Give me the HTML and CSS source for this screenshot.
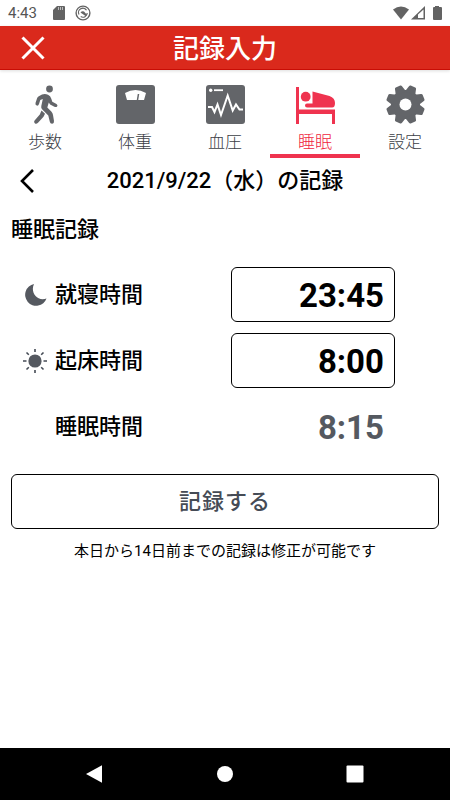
FILE: index.html
```html
<!DOCTYPE html>
<html lang="ja">
<head>
<meta charset="utf-8">
<meta name="viewport" content="width=device-width, initial-scale=1">
<title>記録入力</title>
<link rel="stylesheet" href="styles.css">
</head>
<body>
<div class="status">
  <span class="clock">4:43</span>
  <svg width="12" height="14" viewBox="0 0 12 14"><path fill="#636363" d="M4 0h7q1 0 1 1v12q0 1-1 1H1q-1 0-1-1V4z"/><path stroke="#bbb" d="M5.500 1v3M7.500 1v3M9.500 1v3"/></svg>
  <svg class="sync" width="16" height="16" viewBox="0 0 16 16"><circle cx="8" cy="8" r="6.900" fill="none" stroke="#636363" stroke-width="1.400"/><path fill="none" stroke="#636363" stroke-width="1.200" d="M4 9.500a4.300 4.300 0 0 1 7.500-4.200M12.200 8a4.300 4.300 0 0 1-6.500 3.600"/><path fill="#636363" d="M5.500 7.500q1.500-2 3.500-1l3 3.500-1.500 1z"/></svg>
  <svg class="signals" width="49" height="16" viewBox="0 0 49 16"><path fill="#636363" d="M0 4.500q8-6 16 0L8 14.500z"/><path fill="#636363" d="M18 14.500L32 1v13.500z"/><path fill="#fff" d="M25 9.500l5.500-5v8.500H25z"/><path fill="#636363" d="M42 1h4v1h2q1 0 1 1v11q0 1-1 1h-7q-1 0-1-1V3q0-1 1-1h1z"/></svg>
</div>
<header class="header">
  <button class="close" type="button" aria-label="閉じる"><svg width="24" height="24" viewBox="0 0 24 24"><path stroke="#fff" stroke-width="3" d="M1.500 1.500l21 21M22.500 1.500l-21 21"/></svg></button>
  <h1>記録入力</h1>
</header>
<nav class="tabs">
  <a class="tab" href="#steps">
    <svg width="39" height="39" viewBox="0 0 39 39"><circle cx="23.500" cy="4" r="3.400" fill="#636569"/><path fill="#636569" d="M16 9.500q3-1 6 .2q2.500 1 3.300 4l1 3 4.200 2.300q1.700 1.200.6 2.500q-1 1-2.700.3l-4.300-2.300-1.300-2-1.500 5 4 4q1.500 1.500 1.700 3.500l1 6q.2 2.500-1.700 2.800-2 .2-2.500-2l-1.500-6.300-6-6q-1.500-1.500-1-3.500l1.500-7-2.500 1-1.300 4q-.6 2-2.200 1.600-1.700-.5-1.300-2.500l1.500-4.500q.3-1.500 1.800-2.400z"/><path fill="#636569" d="M15.500 25.500l3.500 3.300-1.500 3-5.500 6q-1.800 1.700-3.200.4-1.300-1.200 0-3l5-5.700z"/></svg>
    <span>歩数</span>
  </a>
  <a class="tab" href="#weight">
    <svg width="39" height="39" viewBox="0 0 39 39"><rect width="39" height="39" rx="3" fill="#636569"/><path fill="#fff" d="M9 8q10.500-6 21 0l-2 7H11z"/><path stroke="#636569" stroke-width="1.500" d="M22.500 9l-1 6"/></svg>
    <span>体重</span>
  </a>
  <a class="tab" href="#pressure">
    <svg width="39" height="39" viewBox="0 0 39 39"><rect width="39" height="39" rx="3" fill="#636569"/><circle cx="4.700" cy="5.300" r="1.700" fill="#fff"/><path stroke="#fff" stroke-width="1.800" d="M8 5.200h9"/><path fill="none" stroke="#fff" stroke-width="2" d="M2 22h4l2.500 5 3-7.500L15 30l6.700-19.500 5 15 3.300-6 3.500 5H37"/></svg>
    <span>血圧</span>
  </a>
  <a class="tab active" href="#sleep" aria-current="page">
    <svg width="39" height="39" viewBox="0 0 39 39"><path fill="#ef334f" d="M0 2h3v22.500h36V39h-3V29H3v10H0z"/><circle cx="9.700" cy="11.700" r="4.900" fill="#ef334f"/><path fill="#ef334f" d="M16.500 6.500l17 4.500q5.500 2 5.500 7t-3.500 4.500H11q-2-.2-2-2t2-2h5.500z"/></svg>
    <span>睡眠</span>
  </a>
  <a class="tab" href="#settings">
    <svg width="39" height="39" viewBox="-19.500 -19.500 39 39"><g fill="#636569"><circle r="14.500"/><g id="teeth"><path id="tooth" d="M-5.500-12l1.700-6.300q.3-1.200 1.400-1.200h4.800q1.100 0 1.400 1.200l1.700 6.300z" transform="rotate(22.500)"/><use href="#tooth" transform="rotate(45)"/><use href="#tooth" transform="rotate(90)"/><use href="#tooth" transform="rotate(135)"/></g><use href="#teeth" transform="rotate(180)"/></g><circle r="6" fill="#fff"/></svg>
    <span>設定</span>
  </a>
</nav>
<main>
  <div class="date">
    <button class="back" type="button" aria-label="前の日"><svg width="16" height="24" viewBox="0 0 16 24"><path fill="none" stroke="#000" stroke-width="2.600" d="M14 1L3 12l11 11"/></svg></button>
    <h2>2021/9/22（水）の記録</h2>
  </div>
  <h3>睡眠記録</h3>
  <form class="form">
    <div class="row">
      <svg width="24" height="24" viewBox="0 0 24 24"><path fill="#555960" d="M11 1C7 9 14 19 23.500 15.500A11 11 0 1 1 11 1z"/></svg>
      <label for="bed">就寝時間</label>
      <input id="bed" type="text" value="23:45">
    </div>
    <div class="row">
      <svg width="24" height="24" viewBox="0 0 24 24"><circle cx="12" cy="12" r="6.600" fill="#555960"/><path stroke="#454b55" stroke-width="1.600" d="M12 0v3M12 21v3M0 12h3.500M20.500 12H24M3.500 3.500l2.300 2.300M18.200 18.200l2.300 2.300M20.500 3.500l-2.300 2.300M5.800 18.200l-2.300 2.300"/></svg>
      <label for="wake">起床時間</label>
      <input id="wake" type="text" value="8:00">
    </div>
    <div class="row">
      <span></span>
      <label for="total">睡眠時間</label>
      <output id="total">8:15</output>
    </div>
    <button class="save" type="button">記録する</button>
  </form>
  <p class="note">本日から14日前までの記録は修正が可能です</p>
</main>
<footer class="system">
  <button type="button" aria-label="戻る"><svg width="18" height="18" viewBox="0 0 18 18"><path fill="#fff" d="M0 9L16 .300v17.400z"/></svg></button>
  <button type="button" aria-label="ホーム"><svg width="18" height="18" viewBox="0 0 18 18"><circle cx="9" cy="9" r="8" fill="#fff"/></svg></button>
  <button type="button" aria-label="履歴"><svg width="18" height="18" viewBox="0 0 18 18"><rect x=".500" y=".500" width="17" height="17" rx="1" fill="#fff"/></svg></button>
</footer>
</body>
</html>
```
FILE: styles.css
```css
* {
  box-sizing: border-box;
}

body {
  margin: 0;
  min-height: 100vh;
  display: flex;
  flex-direction: column;
  background: #fff;
  color: #000;
  font-family: Roboto, "Noto Sans CJK JP", sans-serif;
}

svg {
  display: block;
  flex: none;
}

button {
  padding: 0;
  border: 0;
  background: none;
  color: inherit;
  font: inherit;
}

h1, h2, h3, p {
  margin: 0;
}

.status {
  height: 26px;
  padding: 0 8px;
  display: flex;
  align-items: center;
  color: #555;
  font-size: 15px;
  line-height: 20px;
}

.clock {
  margin-right: 16px;
}

.sync {
  margin-left: 10px;
}

.signals {
  margin-left: auto;
}

.header {
  height: 44px;
  display: grid;
  grid-template-columns: 64px 1fr 64px;
  align-items: center;
  background: #da291c;
  border-bottom: 1px solid #c80d05;
  box-shadow: 0 1px 3px #ddd;
  color: #fff;
  text-align: center;
}

.close {
  padding-left: 21px;
}

h1 {
  padding-top: 2px;
  font-size: 26px;
  line-height: 40px;
  font-weight: 500;
}

.tabs {
  display: grid;
  grid-template-columns: repeat(5, 1fr);
  padding-top: 15px;
}

.tab {
  display: flex;
  flex-direction: column;
  align-items: center;
  gap: 6px;
  border-bottom: 4px solid transparent;
  color: #3c4046;
  font-size: 17px;
  line-height: 24px;
  font-weight: 300;
  text-decoration: none;
}

.tab.active {
  border-color: #ef334f;
  color: #ef1d3d;
}

main {
  flex: 1;
  padding: 0 11px;
}

.date {
  display: grid;
  grid-template-columns: 32px 1fr 32px;
  align-items: center;
  height: 46px;
  text-align: center;
}

.back {
  padding-left: 8px;
}

h2, h3, .row, .save {
  font-size: 22px;
  line-height: 32px;
  font-weight: 500;
}

h3 {
  margin-top: 10px;
}

.form {
  margin-top: 21px;
  display: grid;
  gap: 11px;
}

.row {
  display: grid;
  grid-template-columns: 24px 1fr 164px;
  column-gap: 8px;
  align-items: center;
  height: 55px;
  padding: 0 44px 0 12px;
}

.row input, .row output {
  width: 100%;
  height: 55px;
  padding: 2px 10px 0;
  border: 1px solid #000;
  border-radius: 6px;
  background: #fff;
  color: #000;
  font-family: Roboto, sans-serif;
  font-size: 33px;
  line-height: 51px;
  font-weight: 700;
  text-align: right;
}

.row output {
  border-color: transparent;
  color: #555960;
}

.save {
  height: 55px;
  margin-top: 9px;
  border: 1px solid #000;
  border-radius: 6px;
  color: #454b55;
  letter-spacing: 1px;
}

.note {
  margin-top: 10px;
  font-size: 15px;
  line-height: 24px;
  text-align: center;
}

.system {
  height: 52px;
  padding: 0 30px;
  display: grid;
  grid-template-columns: repeat(3, 1fr);
  justify-items: center;
  align-items: center;
  background: #000;
}
```
